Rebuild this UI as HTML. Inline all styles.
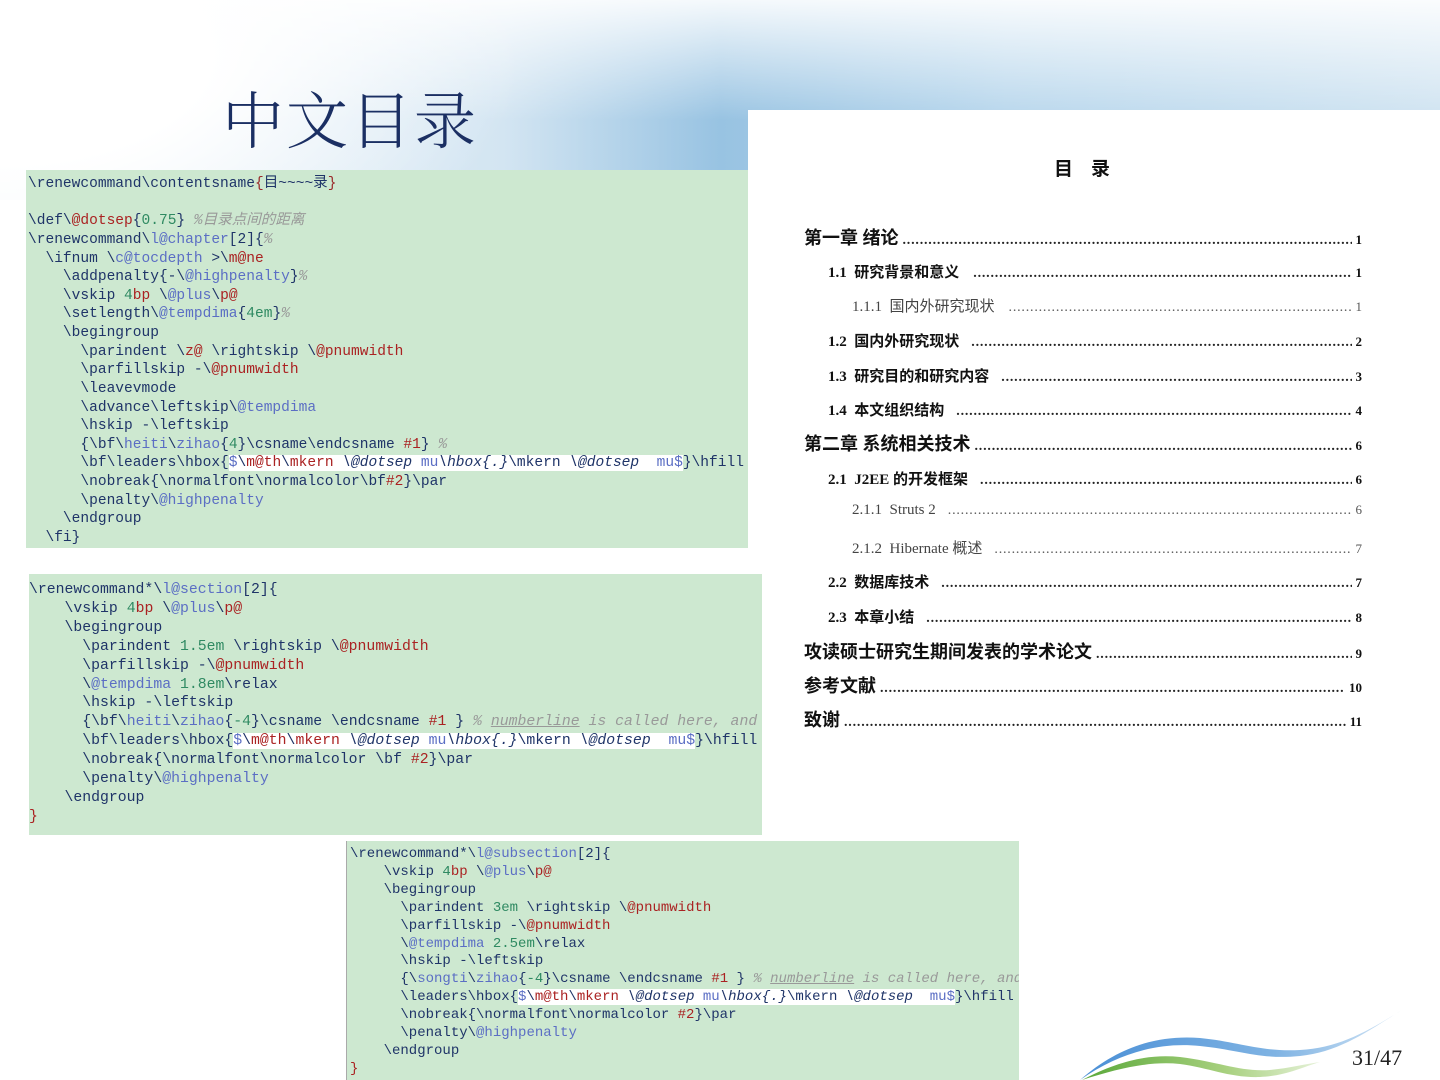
<!DOCTYPE html>
<html><head><meta charset="utf-8">
<style>
*{margin:0;padding:0}
body{width:1440px;height:1080px;position:relative;overflow:hidden;background:#fff;font-family:"Liberation Sans","Noto Sans CJK SC",sans-serif}
.hdr{position:absolute;left:0;top:0;width:1440px;height:200px;
background:
radial-gradient(ellipse 520px 260px at 0px 60px,#fff 0%,#fff 40%,rgba(255,255,255,0) 100%),
linear-gradient(180deg,rgba(255,255,255,0.9) 0%,rgba(255,255,255,0) 60%),
linear-gradient(90deg,#f2f7fb 0%,#d3e5f2 35%,#98c3e2 50%,#b7d6ec 70%,#cfe3f1 100%);}
.title{position:absolute;left:222px;top:72px;font-family:"Noto Serif CJK SC","Noto Sans CJK SC",serif;font-size:62px;color:#1b2f63;letter-spacing:2px;font-weight:300}
.code{position:absolute;background:#cde8d0;font-family:"Liberation Mono",monospace;color:#1f3468;white-space:pre;overflow:hidden}
.code pre{position:absolute;font-family:inherit;}
.a{color:#5b6ec4}.n{color:#2f8a62}.b{color:#9a2a2a}.c{color:#999;font-style:italic}.h{background:#fff}.r{color:#a22}
.toc{position:absolute;left:748px;top:110px;width:692px;height:970px;background:#fff}
.row{position:absolute;display:flex;align-items:baseline;font-family:"Liberation Serif","Noto Sans CJK SC",serif;color:#111;white-space:nowrap;overflow:hidden}
.row .d{flex:1;overflow:hidden;margin:0 4px;letter-spacing:0.8px;font-weight:bold;font-size:14px;color:#222}
.row .d::before{content:"................................................................................................................................................................................................................................................................"}
.row .p{font-size:13px;font-weight:bold}
.ch{font-weight:bold;font-size:18px}
.se{font-weight:bold;font-size:15px}
.su{font-size:15px;color:#444}
.su .d,.su .p{font-weight:normal;color:#555}
</style></head><body>
<div class="hdr"></div>
<div class="title">中文目录</div>
<div class="toc"></div>

<div class="code" style="left:26px;top:170px;width:722px;height:378px;font-size:14.55px;line-height:18.63px">
<pre style="left:2px;top:5px">\renewcommand\contentsname<span class="b">{</span>目~~~~录<span class="b">}</span>

\def\<span class="r">@dotsep</span>{<span class="n">0.75</span>} <span class="c">%目录点间的距离</span>
\renewcommand\<span class="a">l@chapter</span>[2]{<span class="c">%</span>
  \ifnum \<span class="a">c@tocdepth</span> &gt;\<span class="r">m@ne</span>
    \addpenalty{-\<span class="a">@highpenalty</span>}<span class="c">%</span>
    \vskip <span class="n">4</span><span class="r">bp</span> \<span class="a">@plus</span>\<span class="r">p@</span>
    \setlength\<span class="a">@tempdima</span>{<span class="n">4em</span>}<span class="c">%</span>
    \begingroup
      \parindent \<span class="r">z@</span> \rightskip \<span class="r">@pnumwidth</span>
      \parfillskip -\<span class="r">@pnumwidth</span>
      \leavevmode
      \advance\leftskip\<span class="a">@tempdima</span>
      \hskip -\leftskip
      {\bf\<span class="a">heiti</span>\<span class="a">zihao</span>{<span class="n">4</span>}\csname\endcsname <span class="r">#1</span>} <span class="c">%</span>
      \bf\leaders\hbox{<span class="h"><span class="a">$</span>\<span class="r">m@th</span>\<span class="r">mkern</span> <i>\@dotsep</i> <span class="a">mu</span><i>\hbox{.}</i>\mkern <i>\@dotsep</i>  <span class="a">mu$</span></span>}\hfill
      \nobreak{\normalfont\normalcolor\bf<span class="r">#2</span>}\par
      \penalty\<span class="a">@highpenalty</span>
    \endgroup
  \fi}</pre></div>

<div class="code" style="left:29px;top:574px;width:733px;height:261px;font-size:14.8px;line-height:18.9px">
<pre style="left:0px;top:7px">\renewcommand*\<span class="a">l@section</span>[2]{
    \vskip <span class="n">4</span><span class="r">bp</span> \<span class="a">@plus</span>\<span class="r">p@</span>
    \begingroup
      \parindent <span class="n">1.5em</span> \rightskip \<span class="r">@pnumwidth</span>
      \parfillskip -\<span class="r">@pnumwidth</span>
      \<span class="a">@tempdima</span> <span class="n">1.8em</span>\relax
      \hskip -\leftskip
      {\bf\<span class="a">heiti</span>\<span class="a">zihao</span>{<span class="n">-4</span>}\csname \endcsname <span class="r">#1</span> } <span class="c">% <u>numberline</u> is called here, and</span>
      \bf\leaders\hbox{<span class="h"><span class="a">$</span>\<span class="r">m@th</span>\<span class="r">mkern</span> <i>\@dotsep</i> <span class="a">mu</span><i>\hbox{.}</i>\mkern <i>\@dotsep</i>  <span class="a">mu$</span></span>}\hfill
      \nobreak{\normalfont\normalcolor \bf <span class="r">#2</span>}\par
      \penalty\<span class="a">@highpenalty</span>
    \endgroup
<span class="r">}</span></pre></div>

<div class="code" style="left:346px;top:841px;width:672px;height:239px;font-size:14px;line-height:17.9px;border-left:1px solid #aaa">
<pre style="left:3px;top:5px">\renewcommand*\<span class="a">l@subsection</span>[2]{
    \vskip <span class="n">4</span><span class="r">bp</span> \<span class="a">@plus</span>\<span class="r">p@</span>
    \begingroup
      \parindent <span class="n">3em</span> \rightskip \<span class="r">@pnumwidth</span>
      \parfillskip -\<span class="r">@pnumwidth</span>
      \<span class="a">@tempdima</span> <span class="n">2.5em</span>\relax
      \hskip -\leftskip
      {\<span class="a">songti</span>\<span class="a">zihao</span>{<span class="n">-4</span>}\csname \endcsname <span class="r">#1</span> } <span class="c">% <u>numberline</u> is called here, and</span>
      \leaders\hbox{<span class="h"><span class="a">$</span>\<span class="r">m@th</span>\<span class="r">mkern</span> <i>\@dotsep</i> <span class="a">mu</span><i>\hbox{.}</i>\mkern <i>\@dotsep</i>  <span class="a">mu$</span></span>}\hfill
      \nobreak{\normalfont\normalcolor <span class="r">#2</span>}\par
      \penalty\<span class="a">@highpenalty</span>
    \endgroup
<span class="r">}</span></pre></div>

<div style="position:absolute;left:1054px;top:154px;font-family:'Noto Sans CJK SC',sans-serif;font-weight:bold;font-size:19px;color:#111;letter-spacing:18px">目录</div>

<div class="row ch" style="left:804px;width:558px;top:224px"><span>第一章 绪论</span><span class="d"></span><span class="p">1</span></div>
<div class="row se" style="left:828px;width:534px;top:261px"><span>1.1&nbsp; 研究背景和意义</span><span class="d" style="margin-left:14px"></span><span class="p">1</span></div>
<div class="row su" style="left:852px;width:510px;top:295px"><span>1.1.1&nbsp; 国内外研究现状</span><span class="d" style="margin-left:14px"></span><span class="p">1</span></div>
<div class="row se" style="left:828px;width:534px;top:330px"><span>1.2&nbsp; 国内外研究现状</span><span class="d" style="margin-left:12px"></span><span class="p">2</span></div>
<div class="row se" style="left:828px;width:534px;top:365px"><span>1.3&nbsp; 研究目的和研究内容</span><span class="d" style="margin-left:12px"></span><span class="p">3</span></div>
<div class="row se" style="left:828px;width:534px;top:399px"><span>1.4&nbsp; 本文组织结构</span><span class="d" style="margin-left:12px"></span><span class="p">4</span></div>
<div class="row ch" style="left:804px;width:558px;top:430px"><span>第二章 系统相关技术</span><span class="d"></span><span class="p">6</span></div>
<div class="row se" style="left:828px;width:534px;top:468px"><span>2.1&nbsp; J2EE 的开发框架</span><span class="d" style="margin-left:12px"></span><span class="p">6</span></div>
<div class="row su" style="left:852px;width:510px;top:502px"><span>2.1.1&nbsp; Struts 2</span><span class="d" style="margin-left:12px"></span><span class="p">6</span></div>
<div class="row su" style="left:852px;width:510px;top:537px"><span>2.1.2&nbsp; Hibernate 概述</span><span class="d" style="margin-left:12px"></span><span class="p">7</span></div>
<div class="row se" style="left:828px;width:534px;top:571px"><span>2.2&nbsp; 数据库技术</span><span class="d" style="margin-left:12px"></span><span class="p">7</span></div>
<div class="row se" style="left:828px;width:534px;top:606px"><span>2.3&nbsp; 本章小结</span><span class="d" style="margin-left:12px"></span><span class="p">8</span></div>
<div class="row ch" style="left:804px;width:558px;top:638px"><span>攻读硕士研究生期间发表的学术论文</span><span class="d"></span><span class="p">9</span></div>
<div class="row ch" style="left:804px;width:558px;top:672px"><span>参考文献</span><span class="d"></span><span class="p">10</span></div>
<div class="row ch" style="left:804px;width:558px;top:706px"><span>致谢</span><span class="d"></span><span class="p">11</span></div>

<svg style="position:absolute;left:1060px;top:990px" width="380" height="90" viewBox="0 0 380 90">
<defs>
<linearGradient id="g1" x1="0" x2="1"><stop offset="0" stop-color="#4a8fd6"/><stop offset="0.6" stop-color="#7fb3e3"/><stop offset="1" stop-color="#d6e7f6"/></linearGradient>
<linearGradient id="g2" x1="0" x2="1"><stop offset="0" stop-color="#5aa83a"/><stop offset="0.6" stop-color="#a7d07e"/><stop offset="1" stop-color="#e6f2d9"/></linearGradient>
</defs>
<path d="M20 90 C60 55 100 45 140 48 C180 52 200 62 240 60 C280 58 310 40 345 18 C310 40 280 62 240 66 C200 70 180 60 140 56 C100 52 60 62 20 90Z" fill="url(#g1)"/>
<path d="M22 90 C60 70 90 64 120 67 C160 72 180 82 210 80 C230 78 245 74 260 72 C240 78 225 86 200 87 C170 88 150 78 120 74 C90 71 60 78 22 90Z" fill="url(#g2)"/>
</svg>
<div style="position:absolute;left:1352px;top:1045px;font-family:'Liberation Serif',serif;font-size:22px;color:#222">31/47</div>
</body></html>
